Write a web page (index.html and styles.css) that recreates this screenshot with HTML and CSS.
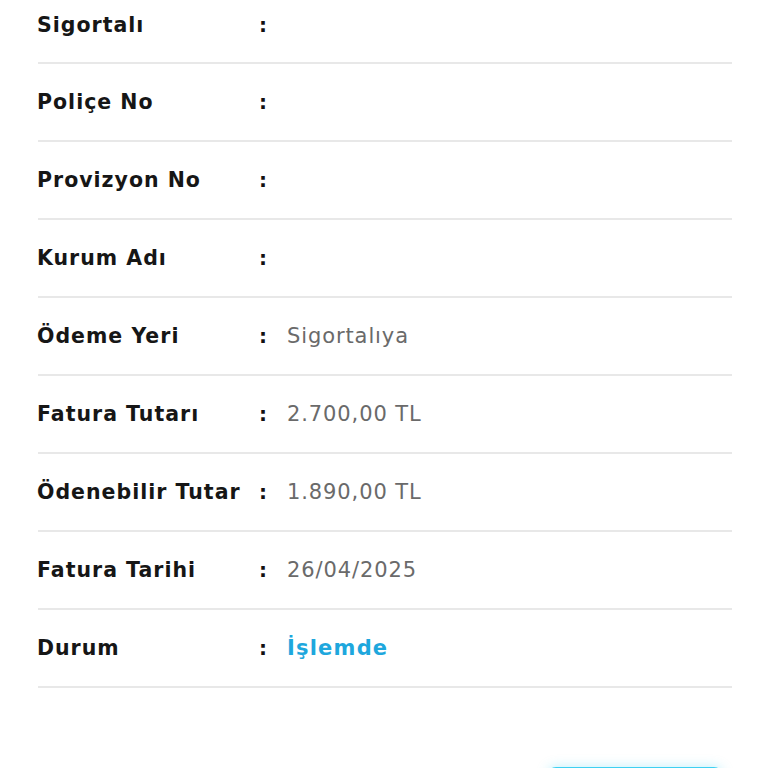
FILE: index.html
```html
<!DOCTYPE html>
<html lang="tr">

<head>
    <meta charset="UTF-8">
    <meta name="viewport" content="width=device-width, initial-scale=1.0">
    <title>Provizyon Detayı</title>
    <link rel="stylesheet" href="styles.css">
</head>

<body>
    <div class="detail-container">
        <!-- detay listesi -->
        <div class="detail-list">
            <div class="detail-row">
                <span class="detail-label">Sigortalı</span>
                <span class="detail-colon">:</span>
                <span class="detail-value"></span>
            </div>
            <div class="detail-row">
                <span class="detail-label">Poliçe No</span>
                <span class="detail-colon">:</span>
                <span class="detail-value"></span>
            </div>
            <div class="detail-row">
                <span class="detail-label">Provizyon No</span>
                <span class="detail-colon">:</span>
                <span class="detail-value"></span>
            </div>
            <div class="detail-row">
                <span class="detail-label">Kurum Adı</span>
                <span class="detail-colon">:</span>
                <span class="detail-value"></span>
            </div>
            <div class="detail-row">
                <span class="detail-label">Ödeme Yeri</span>
                <span class="detail-colon">:</span>
                <span class="detail-value">Sigortalıya</span>
            </div>
            <div class="detail-row">
                <span class="detail-label">Fatura Tutarı</span>
                <span class="detail-colon">:</span>
                <span class="detail-value">2.700,00 TL</span>
            </div>
            <div class="detail-row">
                <span class="detail-label">Ödenebilir Tutar</span>
                <span class="detail-colon">:</span>
                <span class="detail-value">1.890,00 TL</span>
            </div>
            <div class="detail-row">
                <span class="detail-label">Fatura Tarihi</span>
                <span class="detail-colon">:</span>
                <span class="detail-value">26/04/2025</span>
            </div>
            <div class="detail-row">
                <span class="detail-label">Durum</span>
                <span class="detail-colon">:</span>
                <span class="detail-value status">İşlemde</span>
            </div>
        </div>

        <!-- alt buton (ekranın altında kalıyor) -->
        <div class="action-bar">
            <button class="action-button" aria-label="Tamam"></button>
        </div>
    </div>
</body>

</html>
```

FILE: styles.css
```css
body {
    margin: 0;
    padding: 0;
    box-sizing: border-box;
    font-family: "DejaVu Sans", "Noto Sans", Arial, sans-serif;
    background: #fff;
    color: #111;
    overflow: hidden;
}

.detail-container {
    padding: 0 36px 0 38px;
}

/* ilk satır yukarıda kesik */
.detail-list {
    margin-top: -13px;
}

.detail-row {
    display: flex;
    align-items: center;
    height: 76px;
    border-bottom: 2px solid #e8e8e8;
}

.detail-row:first-child {
    height: 75px;
}

.detail-label {
    width: 222px;
    margin-left: -1px;
    font-size: 20.5px;
    font-weight: bold;
    letter-spacing: 1px;
    color: #161616;
}

.detail-colon {
    width: 28px;
    font-size: 20px;
    font-weight: bold;
}

.detail-value {
    font-size: 21px;
    color: #6a6a6a;
    letter-spacing: 0.9px;
}

.status {
    color: #1ea7dd;
    font-weight: bold;
    letter-spacing: 1.2px;
}

.action-bar {
    display: flex;
    justify-content: flex-end;
    padding: 79px 10px 0 0;
}

.action-button {
    width: 174px;
    height: 48px;
    border: none;
    border-radius: 8px;
    background: #3fd0f2;
    box-shadow: 0 0 12px rgba(63, 208, 242, 0.35);
}
```
